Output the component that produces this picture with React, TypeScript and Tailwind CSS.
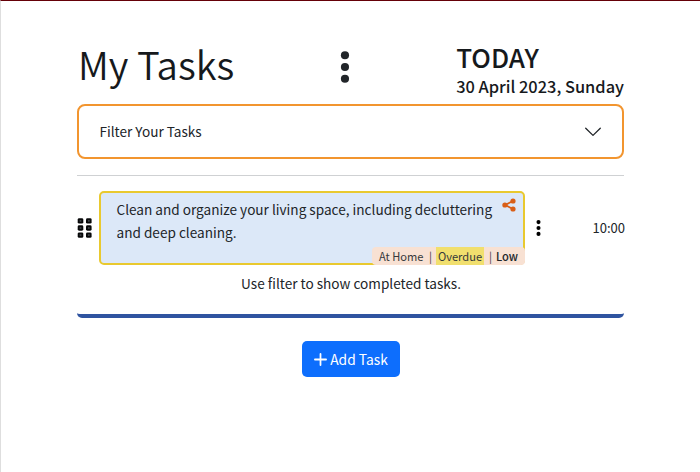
import React from "react";

const DOTS = [0, 1, 2];

function Kebab({ className }: { className: string }) {
  return (
    <svg viewBox="0 0 10 32" className={className} fill="currentColor">
      {DOTS.map((i) => (
        <circle key={i} cx="5" cy={4.2 + i * 11.8} r="4.1" />
      ))}
    </svg>
  );
}

function Header() {
  return (
    <header className="flex h-[60px] w-[547px]">
      <h1 className="w-[264.5px] whitespace-nowrap pl-px text-[38.3px] font-[350] leading-[39px] text-[#16191c]">My Tasks</h1>
      <Kebab className="mt-[7px] h-8 w-[10px]" />
      <div className="ml-[106.5px] whitespace-nowrap font-medium text-[#16191c]">
        <div className="text-[26px] leading-[25px]">TODAY</div>
        <div className="mt-[4px] text-[16.4px] leading-[27px]">30 April 2023, Sunday</div>
      </div>
    </header>
  );
}

function Filter() {
  return (
    <button className="flex h-[55px] w-[547px] items-center justify-between rounded-[8px] border-2 border-[#f2952f] pl-[20.5px] pr-[20px] text-left text-[13.6px]">
      <span className="whitespace-nowrap">Filter Your Tasks</span>
      <svg viewBox="0 0 18 10" className="h-[10px] w-[18px]" fill="none" stroke="currentColor" strokeWidth="1.3" strokeLinecap="round" strokeLinejoin="round">
        <path d="M1.7 1.2 9 8.4l7.3-7.2" />
      </svg>
    </button>
  );
}

function DragHandle() {
  return (
    <svg viewBox="0 0 22 20" className="h-5 w-[22px]">
      {[0, 1, 2, 3, 4, 5].map((i) => {
        const x = 0.7 + (i % 2) * 8.3;
        const y = 0.2 + Math.floor(i / 2) * 7.1;
        return (
          <g key={i}>
            <rect x={x} y={y} width="5.6" height="5.4" rx="1.4" fill="#08090a" />
            <rect x={x + 1.9} y={y + 1.8} width="1.8" height="1.8" fill="#3b4045" />
          </g>
        );
      })}
    </svg>
  );
}

function Task() {
  return (
    <div className="flex h-[74px] w-[547px] items-center">
      <DragHandle />
      <div className="relative h-[74px] w-[426px] rounded-[5px] border-2 border-[#e9c92f] bg-[#dce8f8] pl-[15.5px] pt-[4.5px]">
        <p className="whitespace-nowrap text-[13.6px] leading-[23px]">
          Clean and organize your living space, including decluttering
          <br />
          and deep cleaning.
        </p>
        <svg viewBox="0 0 14 14" className="absolute right-[7px] top-[5px] size-[14px]" fill="#d95f18" stroke="#d95f18">
          <path d="M11 3 3.2 7 11 11" fill="none" strokeWidth="1.7" />
          <circle cx="11" cy="3" r="2.6" stroke="none" />
          <circle cx="2.9" cy="7" r="2.6" stroke="none" />
          <circle cx="11" cy="11" r="2.6" stroke="none" />
        </svg>
        <div className="absolute -bottom-[2px] -right-[2px] flex h-[18px] w-[153px] items-center whitespace-nowrap rounded-[4px] bg-[#f8e1d3] pl-[7px] text-[11.1px] text-[#35383b]">
          <span className="w-[50px]">At Home</span>
          <span className="w-[7px]">|</span>
          <span className="flex h-[18px] w-[48px] items-center justify-center bg-[#f1df6e]">Overdue</span>
          <span className="ml-[5px] w-[7px]">|</span>
          <span className="font-medium text-[#212529]">Low</span>
        </div>
      </div>
      <Kebab className="ml-[11px] h-4 w-[5px] text-black" />
      <span className="-mr-px ml-auto text-[13px]">10:00</span>
    </div>
  );
}

export default function App() {
  return (
    <main className="flex h-[472px] w-[700px] flex-col items-start overflow-hidden border-l border-t border-l-[#dedede] border-t-[#650008] bg-white pl-[76px] pt-[43px] font-['Noto_Sans_CJK_SC','Noto_Sans',sans-serif] text-[#212529]">
      <Header />
      <Filter />
      <div className="mt-4 h-px w-[547px] bg-[#cfd1d3]" />
      <section className="mt-[15px] h-[127px] w-[547px] rounded-b-[5px] border-b-4 border-[#2f54a0]">
        <Task />
        <p className="pl-px pt-[6px] text-center text-[13.6px] leading-[24px]">Use filter to show completed tasks.</p>
      </section>
      <button className="ml-[225px] mt-[23px] flex h-9 w-[98px] items-center justify-center gap-[3px] rounded-[5px] bg-[#0d6efd] text-[13.8px] text-white">
        <svg viewBox="0 0 14 14" className="size-[13px]" stroke="currentColor" strokeWidth="1.9" strokeLinecap="round">
          <path d="M7 1v12M1 7h12" />
        </svg>
        <span className="whitespace-nowrap">Add Task</span>
      </button>
    </main>
  );
}
